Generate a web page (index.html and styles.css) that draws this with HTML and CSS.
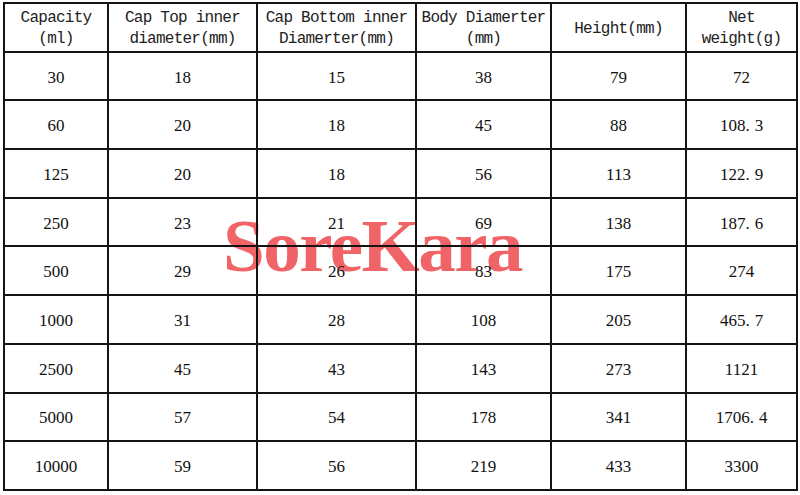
FILE: index.html
```html
<!DOCTYPE html>
<html lang="en">
<head>
<meta charset="utf-8">
<title>Bottle specifications</title>
<link rel="stylesheet" href="styles.css">
</head>
<body>
<div class="sheet">
  <div class="watermark">SoreKara</div>
  <table class="spec">
    <colgroup>
      <col class="c1"><col class="c2"><col class="c3"><col class="c4"><col class="c5"><col class="c6">
    </colgroup>
    <thead>
      <tr>
        <th>Capacity<br>(ml)</th>
        <th>Cap Top inner<br>diameter(mm)</th>
        <th>Cap Bottom inner<br>Diamerter(mm)</th>
        <th>Body Diamerter<br>(mm)</th>
        <th>Height(mm)</th>
        <th>Net<br>weight(g)</th>
      </tr>
    </thead>
    <tbody>
      <tr><td>30</td><td>18</td><td>15</td><td>38</td><td>79</td><td>72</td></tr>
      <tr><td>60</td><td>20</td><td>18</td><td>45</td><td>88</td><td>108<span class="dot">.</span>3</td></tr>
      <tr><td>125</td><td>20</td><td>18</td><td>56</td><td>113</td><td>122<span class="dot">.</span>9</td></tr>
      <tr><td>250</td><td>23</td><td>21</td><td>69</td><td>138</td><td>187<span class="dot">.</span>6</td></tr>
      <tr><td>500</td><td>29</td><td>26</td><td>83</td><td>175</td><td>274</td></tr>
      <tr><td>1000</td><td>31</td><td>28</td><td>108</td><td>205</td><td>465<span class="dot">.</span>7</td></tr>
      <tr><td>2500</td><td>45</td><td>43</td><td>143</td><td>273</td><td>1121</td></tr>
      <tr><td>5000</td><td>57</td><td>54</td><td>178</td><td>341</td><td>1706<span class="dot">.</span>4</td></tr>
      <tr><td>10000</td><td>59</td><td>56</td><td>219</td><td>433</td><td>3300</td></tr>
    </tbody>
  </table>
</div>
</body>
</html>
```

FILE: styles.css
```css
html, body {
  margin: 0;
  padding: 0;
  background: #ffffff;
}

.sheet {
  position: relative;
  width: 800px;
  height: 495px;
  padding: 2px 0 0 3px;
  box-sizing: border-box;
  isolation: isolate;
}

.watermark {
  position: absolute;
  left: 223px;
  top: 208px;
  z-index: -1;
  font-family: "Liberation Serif", serif;
  font-weight: bold;
  font-size: 75px;
  line-height: 1;
  letter-spacing: -1.5px;
  color: #f06468;
  white-space: nowrap;
}

.spec {
  border-collapse: collapse;
  table-layout: fixed;
  width: 795px;
  border: 2px solid #141414;
  background: transparent;
}

.c1 { width: 104px; }
.c2 { width: 149px; }
.c3 { width: 159px; }
.c4 { width: 135px; }
.c5 { width: 135px; }
.c6 { width: 111px; }

.spec tr {
  height: 48.7px;
}

.spec th,
.spec td {
  border: 2px solid #141414;
  padding: 0 2px;
  text-align: center;
  vertical-align: middle;
  white-space: nowrap;
}

.spec th {
  font-family: "Liberation Mono", monospace;
  font-weight: normal;
  font-size: 16px;
  letter-spacing: -0.75px;
  line-height: 21px;
  color: #222222;
  padding-top: 4px;
}

.spec td {
  font-family: "Liberation Serif", serif;
  font-size: 17px;
  line-height: 20px;
  color: #111111;
  padding-top: 3px;
}

.dot {
  letter-spacing: 5px;
}
```
